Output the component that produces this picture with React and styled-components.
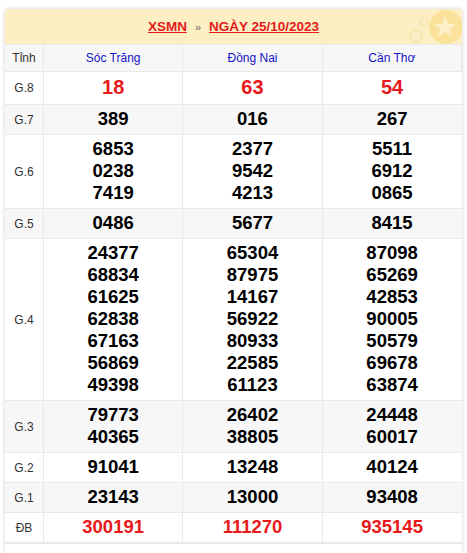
import React from 'react';
import styled, { createGlobalStyle } from 'styled-components';

const GlobalStyle = createGlobalStyle`
  body {
    margin: 0;
    background: #fff;
    font-family: "Liberation Sans", Arial, sans-serif;
  }
`;

const provinces = ['Sóc Trăng', 'Đồng Nai', 'Cần Thơ'];

const prizes = [
  { label: 'G.8', big: true, red: true, values: [['18'], ['63'], ['54']] },
  { label: 'G.7', values: [['389'], ['016'], ['267']] },
  {
    label: 'G.6',
    values: [
      ['6853', '0238', '7419'],
      ['2377', '9542', '4213'],
      ['5511', '6912', '0865'],
    ],
  },
  { label: 'G.5', values: [['0486'], ['5677'], ['8415']] },
  {
    label: 'G.4',
    values: [
      ['24377', '68834', '61625', '62838', '67163', '56869', '49398'],
      ['65304', '87975', '14167', '56922', '80933', '22585', '61123'],
      ['87098', '65269', '42853', '90005', '50579', '69678', '63874'],
    ],
  },
  {
    label: 'G.3',
    values: [
      ['79773', '40365'],
      ['26402', '38805'],
      ['24448', '60017'],
    ],
  },
  { label: 'G.2', values: [['91041'], ['13248'], ['40124']] },
  { label: 'G.1', values: [['23143'], ['13000'], ['93408']] },
  { label: 'ĐB', red: true, values: [['300191'], ['111270'], ['935145']] },
];

const Page = styled.div`
  padding: 9px 5px 0 5px;
`;

const Card = styled.div`
  background: #fff;
  box-shadow: 0 0 4px rgba(0, 0, 0, 0.18);
  border-radius: 3px 3px 0 0;
  overflow: hidden;
`;

const Header = styled.div`
  position: relative;
  height: 35px;
  background: #fcefc4;
  display: flex;
  align-items: center;
  justify-content: center;
  gap: 8px;
  font-size: 13.5px;
  font-weight: bold;
`;

const HeadLink = styled.a`
  color: #e31b1b;
  text-decoration: underline;
  position: relative;
  z-index: 1;
`;

const Sep = styled.span`
  color: #666;
  font-size: 11px;
  font-weight: normal;
`;

const Deco = styled.svg`
  position: absolute;
  right: 0;
  top: 0;
`;

const Table = styled.table`
  width: 100%;
  border-collapse: collapse;
  table-layout: fixed;
`;

const Row = styled.tr`
  background: ${(p) => (p.$shade ? '#f7f7f7' : '#fff')};
`;

const Label = styled.td`
  width: 38px;
  border: 1px solid #e9e9e9;
  border-left: none;
  text-align: center;
  font-size: 12px;
  font-weight: normal;
  color: #333;
  padding: 0;
`;

const Province = styled.th`
  border: 1px solid #e9e9e9;
  font-weight: normal;
  font-size: 12px;
  color: #1414c4;
  height: 26px;
  padding: 0;
`;

const Cell = styled.td`
  border: 1px solid #e9e9e9;
  text-align: center;
  padding: 3px 0 4px;
  &:last-child {
    border-right: none;
  }
`;

const Num = styled.div`
  font-weight: bold;
  font-size: ${(p) => (p.$big ? '20px' : '18.5px')};
  line-height: ${(p) => (p.$big ? '25px' : '22px')};
  color: ${(p) => (p.$red ? '#e8191b' : '#000')};
`;

const Footer = styled.div`
  height: 20px;
  border-top: 1px solid #e9e9e9;
`;

export default function App() {
  return (
    <Page>
      <GlobalStyle />
      <Card>
        <Header>
          <HeadLink>XSMN</HeadLink>
          <Sep>»</Sep>
          <HeadLink>NGÀY 25/10/2023</HeadLink>
          <Deco width="80" height="35" viewBox="0 0 80 35">
            <circle cx="34" cy="27" r="6" fill="none" stroke="#f8e2a6" strokeWidth="1.5" />
            <circle cx="42" cy="13" r="4" fill="none" stroke="#f8e2a6" strokeWidth="1.5" />
            <circle cx="64" cy="18" r="17" fill="#fbe29a" />
            <path
              d="M63 7 L66 15 L74 15 L68 20 L70 28 L63 23 L56 28 L58 20 L52 15 L60 15 Z"
              fill="#fdf0c8"
            />
          </Deco>
        </Header>
        <Table>
          <tbody>
            <Row $shade>
              <Label as="th">Tỉnh</Label>
              {provinces.map((p) => (
                <Province key={p}>{p}</Province>
              ))}
            </Row>
            {prizes.map((prize, i) => (
              <Row key={prize.label} $shade={i % 2 === 1}>
                <Label>{prize.label}</Label>
                {prize.values.map((col, j) => (
                  <Cell key={j}>
                    {col.map((v) => (
                      <Num key={v} $big={prize.big} $red={prize.red}>
                        {v}
                      </Num>
                    ))}
                  </Cell>
                ))}
              </Row>
            ))}
          </tbody>
        </Table>
        <Footer />
      </Card>
    </Page>
  );
}
